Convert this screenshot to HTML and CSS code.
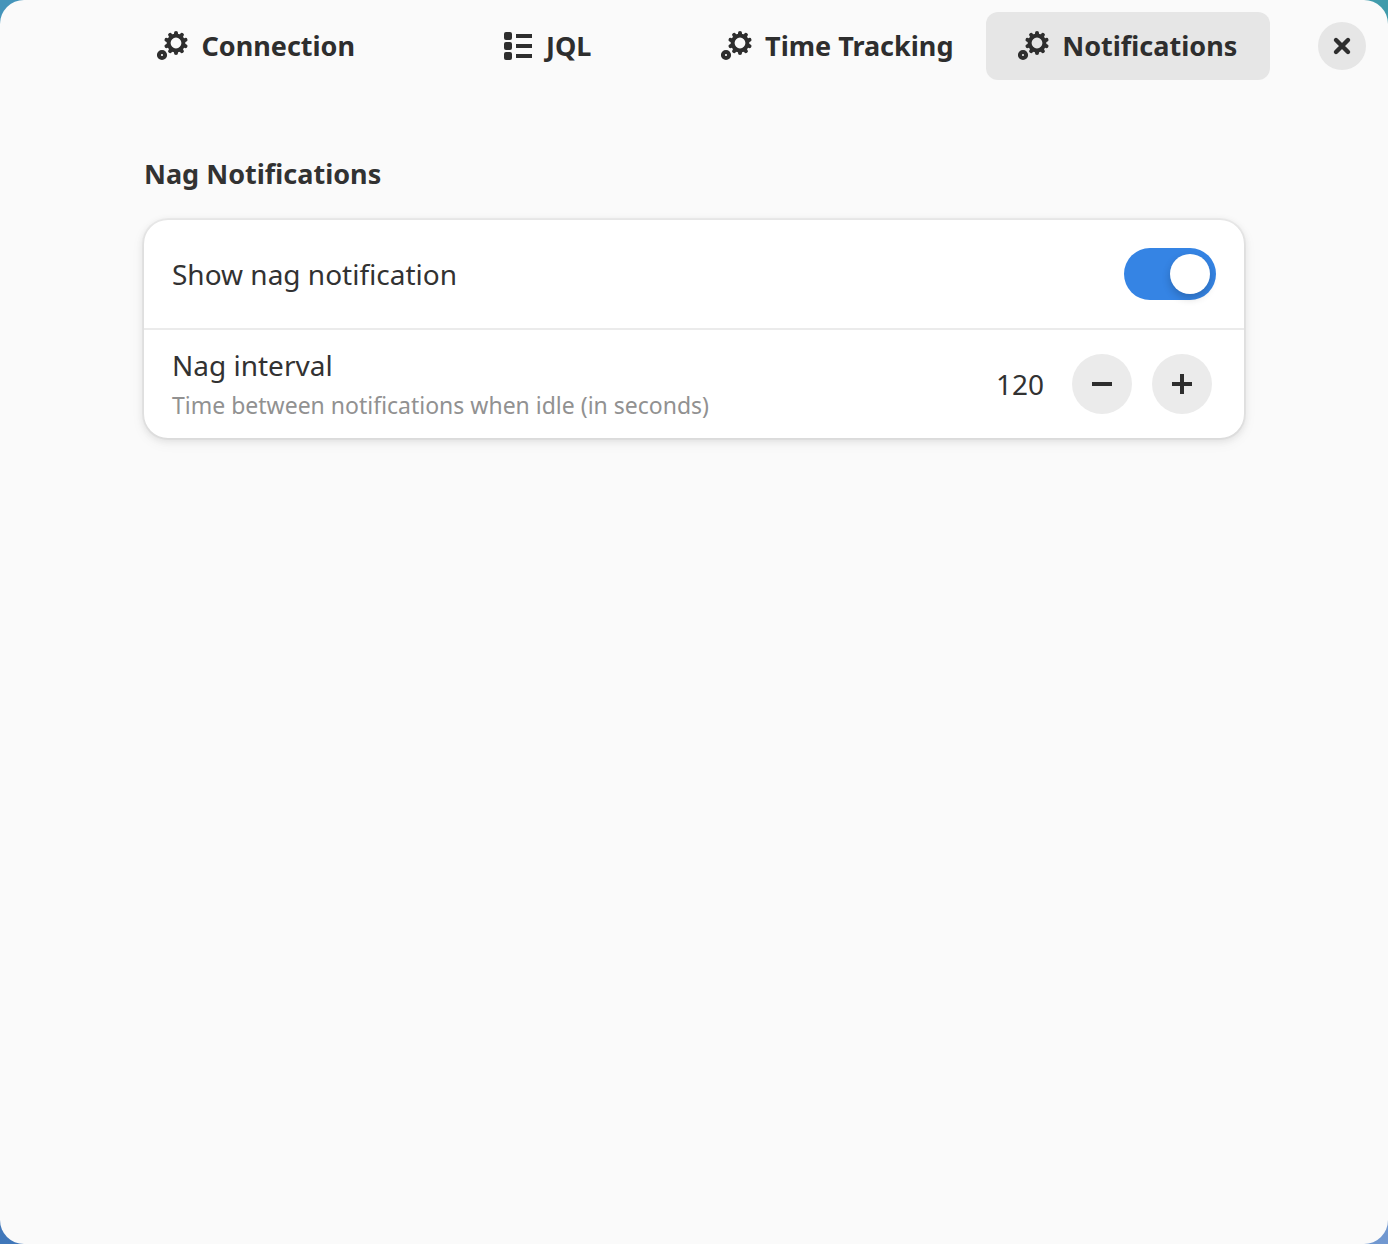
FILE: index.html
```html
<!DOCTYPE html>
<html lang="en">
<head>
<meta charset="utf-8">
<meta name="viewport" content="width=device-width, initial-scale=1">
<title>Preferences</title>
<link rel="stylesheet" href="styles.css">
</head>
<body>
<svg class="sprite" aria-hidden="true">
  <symbol id="gears" viewBox="0 0 32 32">
    <circle cx="19" cy="13" r="7.4" fill="none" stroke="currentColor" stroke-width="4"/>
    <g stroke="currentColor" stroke-width="4" stroke-linecap="round">
      <path id="tooth" d="M19 5V3"/>
      <use href="#tooth" transform="rotate(36 19 13)"/>
      <use href="#tooth" transform="rotate(72 19 13)"/>
      <use href="#tooth" transform="rotate(108 19 13)"/>
      <use href="#tooth" transform="rotate(144 19 13)"/>
      <use href="#tooth" transform="rotate(180 19 13)"/>
      <use href="#tooth" transform="rotate(216 19 13)"/>
      <use href="#tooth" transform="rotate(252 19 13)"/>
      <use href="#tooth" transform="rotate(288 19 13)"/>
      <use href="#tooth" transform="rotate(324 19 13)"/>
    </g>
    <circle cx="5" cy="25" r="3.1" fill="none" stroke="currentColor" stroke-width="4"/>
  </symbol>
</svg>
<div class="window">
  <header class="header">
    <nav class="tabs" aria-label="Preference pages">
      <button class="tab" type="button"><svg class="icon" aria-hidden="true"><use href="#gears"/></svg>Connection</button>
      <button class="tab" type="button"><svg class="icon" viewBox="0 0 32 32" fill="currentColor" aria-hidden="true"><rect x="2" y="2" width="8" height="8" rx="2"/><rect x="2" y="12" width="8" height="8" rx="2"/><rect x="2" y="22" width="8" height="8" rx="2"/><path d="M14 4h16v4H14zM14 14h16v4H14zM14 24h16v4H14z"/></svg>JQL</button>
      <button class="tab" type="button"><svg class="icon" aria-hidden="true"><use href="#gears"/></svg>Time Tracking</button>
      <button class="tab tab-active" type="button" aria-current="page"><svg class="icon" aria-hidden="true"><use href="#gears"/></svg>Notifications</button>
    </nav>
    <button class="round close" type="button" aria-label="Close"><svg class="icon" viewBox="0 0 32 32" aria-hidden="true"><path d="M10 10l12 12M22 10L10 22" stroke="currentColor" stroke-width="4.4" stroke-linecap="round"/></svg></button>
  </header>
  <main class="page">
    <h1 class="title">Nag Notifications</h1>
    <div class="card">
      <div class="row">
        <label class="label" for="show-nag">Show nag notification</label>
        <input class="switch" id="show-nag" type="checkbox" role="switch" checked>
      </div>
      <div class="row">
        <div class="labels">
          <label class="label" for="interval">Nag interval</label>
          <span class="hint" id="interval-hint">Time between notifications when idle (in seconds)</span>
        </div>
        <div class="stepper">
          <input class="value" id="interval" type="text" inputmode="numeric" value="120" aria-describedby="interval-hint">
          <button class="round step" type="button" aria-label="Decrease"><svg class="icon" viewBox="0 0 32 32" aria-hidden="true"><path d="M6 14h20v4H6z" fill="currentColor"/></svg></button>
          <button class="round step" type="button" aria-label="Increase"><svg class="icon" viewBox="0 0 32 32" aria-hidden="true"><path d="M14 6h4v8h8v4h-8v8h-4v-8H6v-4h8z" fill="currentColor"/></svg></button>
        </div>
      </div>
    </div>
  </main>
</div>
</body>
</html>
```
FILE: styles.css
```css
* { box-sizing: border-box; }

body {
  margin: 0;
  background: linear-gradient(90deg, #4494ba, #409bab) top / 100% 50% no-repeat,
    linear-gradient(90deg, #4077ba, #7198d0) bottom / 100% 50% no-repeat;
  color: #323232;
  font: 28px/40px "Noto Sans", sans-serif;
}

button,
input {
  margin: 0;
  padding: 0;
  border: 0;
  color: inherit;
  font: inherit;
}

.sprite { position: absolute; width: 0; height: 0; }

.icon { flex: none; width: 32px; height: 32px; }

.window {
  min-height: 100vh;
  border-radius: 24px;
  background: #fafafa;
}

.header {
  display: flex;
  align-items: center;
  gap: 48px;
  padding: 12px 22px 12px 114px;
}

.tabs {
  display: grid;
  flex: 1;
  grid-template-columns: repeat(4, 1fr);
  gap: 6px;
}

.tab {
  display: flex;
  align-items: center;
  justify-content: center;
  gap: 12px;
  height: 68px;
  border-radius: 12px;
  background: transparent;
  color: #2e2e2e;
  font-size: 27px;
  font-weight: 700;
  white-space: nowrap;
}

.tab-active { background: #e6e6e6; }

.round {
  display: flex;
  flex: none;
  align-items: center;
  justify-content: center;
  border-radius: 50%;
  color: #2e2e2e;
}

.close { width: 48px; height: 48px; background: #e6e6e6; }

.page {
  max-width: 1148px;
  margin: 0 auto;
  padding: 62px 24px 48px;
}

.title {
  margin: 0 0 26px;
  font-size: 27px;
  line-height: 40px;
}

.card {
  border-radius: 24px;
  background: #fff;
  box-shadow: 0 0 0 2px rgba(0, 0, 0, 0.04), 0 2px 6px 2px rgba(0, 0, 0, 0.07), 0 4px 12px 4px rgba(0, 0, 0, 0.03);
}

.row {
  display: flex;
  align-items: center;
  justify-content: space-between;
  min-height: 108px;
  padding: 12px 28px;
}

.row + .row { min-height: 110px; border-top: 2px solid #ebebeb; }

.labels { display: flex; flex-direction: column; gap: 2px; }

.hint { color: #919191; font-size: 23px; line-height: 36px; }

.switch {
  display: flex;
  flex: none;
  align-items: center;
  justify-content: flex-end;
  width: 92px;
  height: 52px;
  padding: 6px;
  border-radius: 26px;
  background: #3584e4;
  appearance: none;
}

.switch::before {
  width: 40px;
  height: 40px;
  border-radius: 50%;
  background: #fff;
  box-shadow: 0 4px 8px rgba(0, 0, 0, 0.2);
  content: "";
}

.switch:not(:checked) { justify-content: flex-start; background: #e1e1e1; }

.stepper { display: flex; align-items: center; gap: 20px; padding-right: 4px; }

.value {
  width: 120px;
  padding-right: 8px;
  background: transparent;
  text-align: right;
}

.step { width: 60px; height: 60px; background: #ebebeb; }
```
